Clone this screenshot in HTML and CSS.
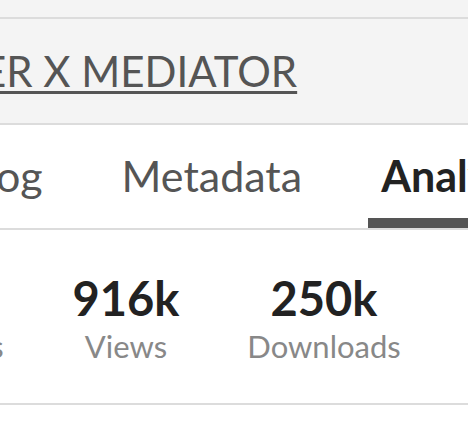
FILE: index.html
```html
<!DOCTYPE html>
<html lang="en">
<head>
    <meta charset="UTF-8">
    <meta name="viewport" content="width=device-width, initial-scale=1.0">
    <title>Dataset Analytics</title>
    <link rel="stylesheet" href="styles.css">
</head>
<body>
    <div class="page">
        <!-- Top strip -->
        <div class="top-strip"></div>

        <!-- Title -->
        <div class="title-bar">
            <a class="title-link" href="#">ER X MEDIATOR</a>
        </div>

        <!-- Tabs -->
        <div class="tabs">
            <button class="tab-button">Changelog</button>
            <button class="tab-button">Metadata</button>
            <button class="tab-button active">Analytics</button>
        </div>

        <!-- Stats -->
        <div class="stats">
            <div class="stat">
                <span class="stat-value">12k</span>
                <span class="stat-label">Collections</span>
            </div>
            <div class="stat">
                <span class="stat-value">916k</span>
                <span class="stat-label">Views</span>
            </div>
            <div class="stat">
                <span class="stat-value">250k</span>
                <span class="stat-label">Downloads</span>
            </div>
        </div>
    </div>
</body>
</html>
```
FILE: styles.css
```css
/* General Styles */
body {
    font-family: Lato, "Open Sans", sans-serif;
    background-color: #fff;
    margin: 0;
    overflow: hidden;
}

.page {
    width: 468px;
    overflow: hidden;
}

.top-strip {
    height: 17px;
    background-color: #f4f4f4;
    border-bottom: 2px solid #dcdcdc;
}

.title-bar {
    height: 104px;
    background-color: #f4f4f4;
    border-bottom: 2px solid #dcdcdc;
    display: flex;
    align-items: center;
    white-space: nowrap;
}

.title-link {
    margin-left: -18px;
    font-size: 42px;
    color: #555;
    text-decoration: underline;
    text-decoration-thickness: 3px;
    text-underline-offset: 4px;
}

.tabs {
    display: flex;
    gap: 53px;
    margin-left: -170px;
    border-bottom: 2px solid #dcdcdc;
    white-space: nowrap;
}

.tab-button {
    flex: none;
    padding: 25px 13px 16px;
    font-family: inherit;
    font-size: 43px;
    line-height: 52px;
    color: #555;
    background-color: transparent;
    border: none;
    border-bottom: 10px solid transparent;
    cursor: pointer;
}

.tab-button.active {
    color: #222;
    font-weight: bold;
    border-bottom-color: #555;
}

.stats {
    display: flex;
    margin-left: -171px;
    padding: 40px 0 37px;
    border-bottom: 2px solid #dcdcdc;
}

.stat {
    flex: none;
    width: 198px;
    display: flex;
    flex-direction: column;
    align-items: center;
}

.stat-value {
    font-size: 47px;
    font-weight: bold;
    color: #222;
    line-height: 56px;
}

.stat-label {
    font-size: 31px;
    color: #888;
    line-height: 40px;
}
```
